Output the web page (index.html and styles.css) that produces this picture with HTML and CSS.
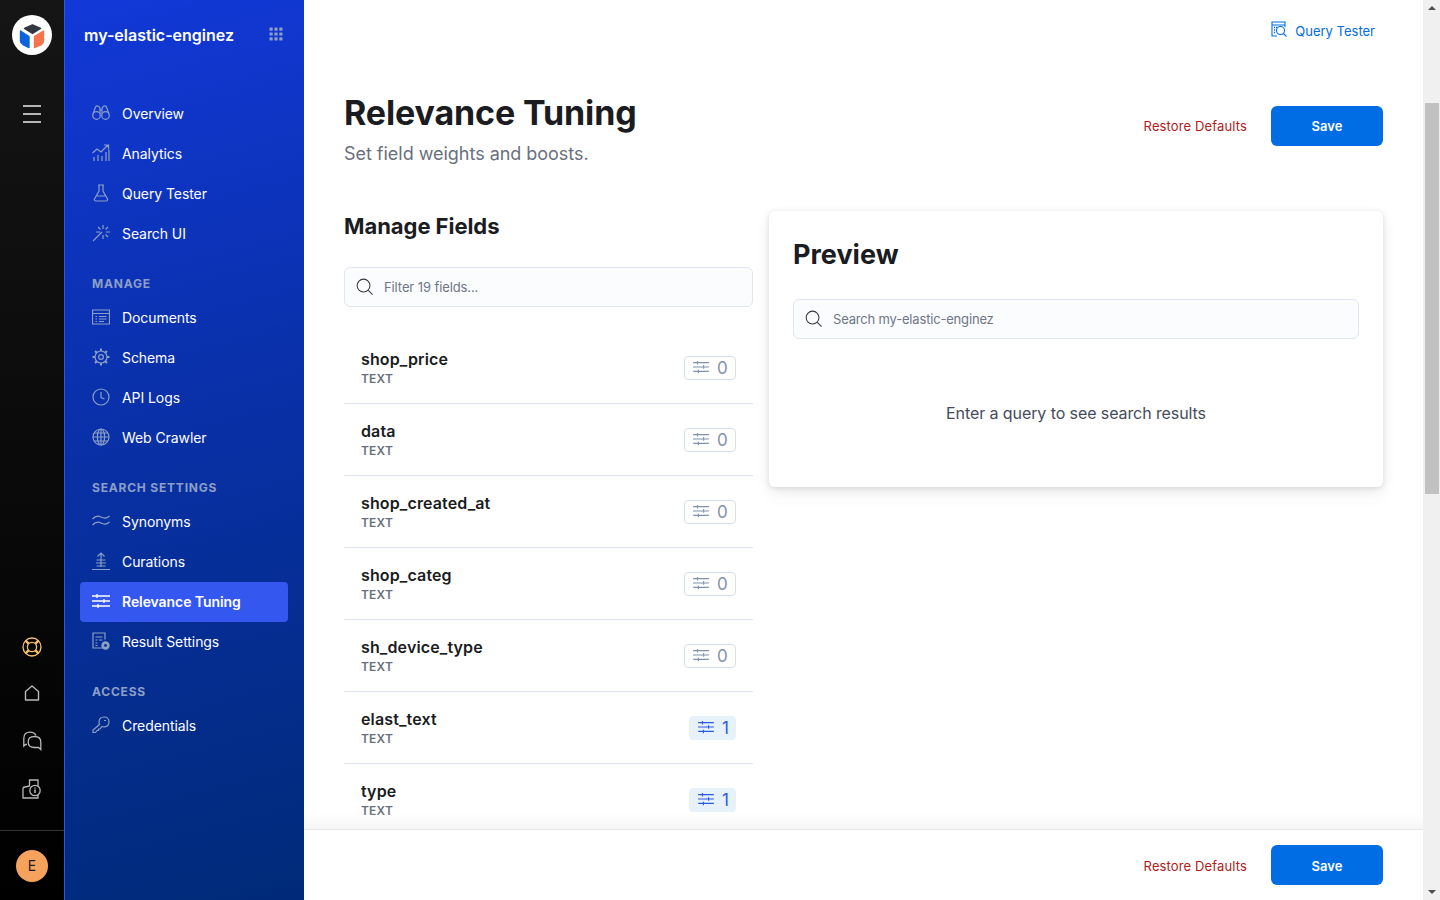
FILE: index.html
```html
<!DOCTYPE html>
<html lang="en">

<head>
    <meta charset="UTF-8">
    <meta name="viewport" content="width=device-width, initial-scale=1.0">
    <title>Relevance Tuning</title>
    <link rel="stylesheet" href="styles.css">
</head>

<body>
    <svg class="defs" width="0" height="0">
        <symbol id="tune" viewBox="0 0 18 16">
            <path d="M0 3h18M0 8h18M0 13h18M5 1v4M12 6v4M6 11v4" fill="none" stroke="currentColor" stroke-width="1.3" />
        </symbol>
        <symbol id="search" viewBox="0 0 18 18">
            <circle cx="8" cy="8" r="6.8" fill="none" stroke="currentColor" stroke-width="1.1" />
            <path d="M13 13l4.5 4.5" fill="none" stroke="currentColor" stroke-width="1.1" />
        </symbol>
    </svg>

    <div class="app">
        <div class="rail">
            <div class="logo">
                <svg width="28" height="28" viewBox="0 0 28 28" stroke-width="1.4" stroke-linejoin="round">
                    <path d="M14.5 4L22.5 7.5L14.5 12.5L6.5 7.5Z" fill="#343741" stroke="#343741" />
                    <path d="M2.5 10L11 15.5V26.5L5 23.5Q2.5 22 2.5 20Z" fill="#0b64dd" stroke="#0b64dd" />
                    <path d="M16.5 15.5L25.5 10V20Q25.5 22 23.5 23.5L16.5 26.5Z" fill="#f6744d" stroke="#f6744d" />
                </svg>
            </div>
            <button class="burger"><span></span><span></span><span></span></button>
            <div class="rail-icons">
                <svg width="20" height="20" viewBox="0 0 20 20" fill="none" stroke="#f5c26b" stroke-width="1.3">
                    <circle cx="10" cy="10" r="9" />
                    <circle cx="10" cy="10" r="4.6" />
                    <path d="M3.6 3.6l3.2 3.2M16.4 3.6l-3.2 3.2M3.6 16.4l3.2-3.2M16.4 16.4l-3.2-3.2" stroke-width="2.4" />
                </svg>
                <svg width="16" height="18" viewBox="0 0 16 18" fill="none" stroke="#b8b8b8" stroke-width="1.4">
                    <path d="M1.5 15V6.5L8 1L14.5 6.5V15Z" stroke-linejoin="round" />
                </svg>
                <svg width="20" height="20" viewBox="0 0 20 20" fill="none" stroke="#b8b8b8" stroke-width="1.3">
                    <path d="M5 13.5H3.5L1.8 15V7.5Q1.8 1.2 8 1.2Q12.5 1.2 14 4.5" />
                    <path d="M12.5 5.5Q18.8 5.5 18.8 11.2V18.5L16.5 16.5H12.5Q6.2 16.5 6.2 11Q6.2 5.5 12.5 5.5Z" />
                </svg>
                <svg width="20" height="20" viewBox="0 0 20 20" fill="none" stroke="#b8b8b8" stroke-width="1.3">
                    <path d="M1 8.5L7.5 7V1H16V8M1 8.5V19H16V15" />
                    <circle cx="13" cy="11.5" r="5.2" fill="#050505" />
                    <path d="M13 10.5v3.6M13 8.6v1" stroke="#ddd" />
                </svg>
            </div>
            <div class="rail-user">
                <div class="avatar">E</div>
            </div>
        </div>

        <nav class="side">
            <div class="brand">
                <span>my-elastic-enginez</span>
                <svg width="14" height="14" viewBox="0 0 14 14" fill="#8c9fc6">
                    <rect x="0.5" y="0.5" width="3.2" height="3.2" rx="0.6" />
                    <rect x="5.4" y="0.5" width="3.2" height="3.2" rx="0.6" />
                    <rect x="10.3" y="0.5" width="3.2" height="3.2" rx="0.6" />
                    <rect x="0.5" y="5.4" width="3.2" height="3.2" rx="0.6" />
                    <rect x="5.4" y="5.4" width="3.2" height="3.2" rx="0.6" />
                    <rect x="10.3" y="5.4" width="3.2" height="3.2" rx="0.6" />
                    <rect x="0.5" y="10.3" width="3.2" height="3.2" rx="0.6" />
                    <rect x="5.4" y="10.3" width="3.2" height="3.2" rx="0.6" />
                    <rect x="10.3" y="10.3" width="3.2" height="3.2" rx="0.6" />
                </svg>
            </div>

            <a class="item"><svg class="ico" viewBox="0 0 18 18"><circle cx="4.5" cy="11.5" r="3.8" /><circle cx="13.5" cy="11.5" r="3.8" /><path d="M1 10L3.5 3Q4.5 1.5 6.5 2.2L8 4V10M17 10L14.5 3Q13.5 1.5 11.5 2.2L10 4V10M8 6h2" /></svg>Overview</a>
            <a class="item"><svg class="ico" viewBox="0 0 18 18"><path d="M0.5 9L5 5L9 8L16 1M12 1h4.5v4.5M2 17v-4M6 17v-6M10 17v-5M14 17V8M17 17V6" /></svg>Analytics</a>
            <a class="item"><svg class="ico" viewBox="0 0 18 18"><path d="M6 1h6M7 1v6L2.5 15Q2 17 4 17H14Q16 17 15.5 15L11 7V1M5 12h8" /></svg>Query Tester</a>
            <a class="item"><svg class="ico" viewBox="0 0 18 18"><path d="M1 17L10 8M11 1v4M11 11v4M4 8h4M14 8h4M6 3l2.5 2.5M16 3l-2.5 2.5M16 13l-2.5-2.5" /></svg>Search UI</a>

            <div class="label">MANAGE</div>
            <a class="item"><svg class="ico" viewBox="0 0 18 18"><path d="M0.5 2h17v14h-17ZM0.5 5.5h17M3.5 8.5h1.5M7 8.5h7.5M3.5 11h1.5M7 11h7.5M3.5 13.5h1.5M7 13.5h5" /></svg>Documents</a>
            <a class="item"><svg class="ico" viewBox="0 0 18 18"><circle cx="9" cy="9" r="6" /><circle cx="9" cy="9" r="2.4" /><path d="M9 0.5v2.5M9 15v2.5M0.5 9h2.5M15 9h2.5M3 3l1.8 1.8M13.2 13.2L15 15M15 3l-1.8 1.8M4.8 13.2L3 15" stroke-width="2" /></svg>Schema</a>
            <a class="item"><svg class="ico" viewBox="0 0 18 18"><circle cx="9" cy="9" r="8" /><path d="M9 4v5.5l3.5 1.5" /></svg>API Logs</a>
            <a class="item"><svg class="ico" viewBox="0 0 18 18"><circle cx="9" cy="9" r="8" /><ellipse cx="9" cy="9" rx="3.6" ry="8" /><path d="M1 9h16M2 5h14M2 13h14M9 1v16" /></svg>Web Crawler</a>

            <div class="label">SEARCH SETTINGS</div>
            <a class="item"><svg class="ico" viewBox="0 0 18 18"><path d="M0.5 7Q4.5 2.5 9 5T17.5 4M0.5 13Q4.5 8.5 9 11T17.5 10" /></svg>Synonyms</a>
            <a class="item"><svg class="ico" viewBox="0 0 18 18"><path d="M0 17.5h18M9 1v14M5.5 4.5L9 1l3.5 3.5M4.5 8h9M4 11h10M4.5 14h9" /></svg>Curations</a>
            <a class="item active"><svg class="ico" viewBox="0 0 18 16"><use href="#tune" /></svg>Relevance Tuning</a>
            <a class="item"><svg class="ico" viewBox="0 0 18 18"><path d="M10.5 16H1V1h12v6.5M3.5 5h7M3.5 8h2M7 8h3.5M3.5 11h2M3.5 13.5h2" /><circle cx="13.5" cy="13.5" r="2.8" stroke-width="2.8" /></svg>Result Settings</a>

            <div class="label">ACCESS</div>
            <a class="item"><svg class="ico" viewBox="0 0 18 18"><path d="M7 6.5Q7 1 12 1Q17 1 17 6Q17 11 11.5 11L10 10.5L8 13H6.5V14.5H5L3.5 16.5H1V14L7.5 8.5Q7 7.5 7 6.5ZM12 4.5h2" /></svg>Credentials</a>
        </nav>

        <div class="main">
            <div class="scroll">
                <div class="top-link">
                    <a>
                        <svg width="16" height="16" viewBox="0 0 16 16" fill="none" stroke="currentColor" stroke-width="1.1">
                            <path d="M6 15H1V1h13v5M1 4h13" />
                            <path d="M3 6.5h1M5 6.5h1M3 9h1M3 11.5h1" stroke-width="1.4" />
                            <circle cx="9.5" cy="9.5" r="4" />
                            <path d="M12.5 12.5l3 3" />
                        </svg>
                        Query Tester
                    </a>
                </div>

                <div class="page-head">
                    <div>
                        <h1>Relevance Tuning</h1>
                        <p>Set field weights and boosts.</p>
                    </div>
                    <div class="actions">
                        <a class="restore">Restore Defaults</a>
                        <button class="save">Save</button>
                    </div>
                </div>

                <div class="columns">
                    <div class="fields">
                        <h2>Manage Fields</h2>
                        <div class="search-box">
                            <svg class="search-ico"><use href="#search" /></svg>
                            <span>Filter 19 fields...</span>
                        </div>
                        <div class="field-list">
                            <div class="field">
                                <div><div class="name">shop_price</div><div class="type">TEXT</div></div>
                                <div class="weight"><svg><use href="#tune" /></svg>0</div>
                            </div>
                            <div class="field">
                                <div><div class="name">data</div><div class="type">TEXT</div></div>
                                <div class="weight"><svg><use href="#tune" /></svg>0</div>
                            </div>
                            <div class="field">
                                <div><div class="name">shop_created_at</div><div class="type">TEXT</div></div>
                                <div class="weight"><svg><use href="#tune" /></svg>0</div>
                            </div>
                            <div class="field">
                                <div><div class="name">shop_categ</div><div class="type">TEXT</div></div>
                                <div class="weight"><svg><use href="#tune" /></svg>0</div>
                            </div>
                            <div class="field">
                                <div><div class="name">sh_device_type</div><div class="type">TEXT</div></div>
                                <div class="weight"><svg><use href="#tune" /></svg>0</div>
                            </div>
                            <div class="field">
                                <div><div class="name">elast_text</div><div class="type">TEXT</div></div>
                                <div class="weight on"><svg><use href="#tune" /></svg>1</div>
                            </div>
                            <div class="field">
                                <div><div class="name">type</div><div class="type">TEXT</div></div>
                                <div class="weight on"><svg><use href="#tune" /></svg>1</div>
                            </div>
                        </div>
                    </div>

                    <div class="preview">
                        <h2>Preview</h2>
                        <div class="search-box">
                            <svg class="search-ico"><use href="#search" /></svg>
                            <span>Search my-elastic-enginez</span>
                        </div>
                        <div class="empty">Enter a query to see search results</div>
                    </div>
                </div>
            </div>

            <div class="footer">
                <a class="restore">Restore Defaults</a>
                <button class="save">Save</button>
            </div>
        </div>

        <div class="scrollbar">
            <div class="arrow up"></div>
            <div class="track"><div class="thumb"></div></div>
            <div class="arrow down"></div>
        </div>
    </div>
</body>

</html>
```

FILE: styles.css
```css
* {
    box-sizing: border-box;
}

body {
    margin: 0;
    font-family: Inter, "Noto Sans", sans-serif;
    color: #1a1c21;
    background-color: #fff;
    overflow: hidden;
}

.defs {
    display: block;
    height: 0;
}

h1,
h2,
p {
    margin: 0;
}

.app {
    display: flex;
    height: 900px;
}

/* dark rail */
.rail {
    width: 64px;
    flex-shrink: 0;
    display: flex;
    flex-direction: column;
    align-items: center;
    background: linear-gradient(180deg, #151515, #000);
}

.logo {
    width: 40px;
    height: 40px;
    margin-top: 15px;
    border-radius: 50%;
    background-color: #fff;
    display: flex;
    align-items: center;
    justify-content: center;
}

.burger {
    width: 18px;
    margin-top: 50px;
    padding: 0;
    border: none;
    background: none;
    display: flex;
    flex-direction: column;
    gap: 6px;
}

.burger span {
    height: 2px;
    background-color: #b5b5b5;
}

.rail-icons {
    margin-top: auto;
    display: flex;
    flex-direction: column;
    align-items: center;
    gap: 28px;
    margin-bottom: 31px;
}

.rail-user {
    width: 100%;
    height: 70px;
    border-top: 1px solid #333;
    display: flex;
    align-items: center;
    justify-content: center;
}

.avatar {
    width: 32px;
    height: 32px;
    border-radius: 50%;
    background-color: #f5a35c;
    color: #1a1c21;
    font-size: 14px;
    display: flex;
    align-items: center;
    justify-content: center;
}

/* blue nav */
.side {
    width: 240px;
    flex-shrink: 0;
    padding: 0 16px;
    border-left: 1px solid #3055e8;
    background: linear-gradient(165deg, #1238d8 0%, #0a31ad 40%, #002a78 100%);
}

.brand {
    height: 94px;
    padding: 0 4px 0 3px;
    display: flex;
    justify-content: space-between;
    align-items: flex-start;
    color: #fff;
    font-size: 16px;
    font-weight: 600;
    line-height: 70px;
}

.brand svg {
    margin-top: 27px;
    margin-right: 1px;
}

.item {
    height: 40px;
    padding: 0 12px 2px;
    border-radius: 4px;
    display: flex;
    align-items: center;
    gap: 12px;
    color: #fff;
    font-size: 14px;
    letter-spacing: -0.08px;
    width: 208px;
    margin-left: -1px;
}

.item.active {
    background-color: #3457f0;
    font-weight: 600;
}

.ico {
    width: 18px;
    height: 18px;
    fill: none;
    stroke: #8c9fc6;
    stroke-width: 1.2;
}

.item.active .ico {
    stroke: none;
    color: #fff;
}

.label {
    height: 24px;
    margin-top: 20px;
    padding-left: 11px;
    color: #8c9fc6;
    font-size: 12px;
    font-weight: 700;
    letter-spacing: 0.8px;
    line-height: 20px;
}

/* main */
.main {
    flex: 1;
    display: flex;
    flex-direction: column;
    min-width: 0;
}

.scroll {
    flex: 1;
    overflow: hidden;
    padding: 0 40px;
    min-height: 0;
}

.top-link {
    height: 62px;
    padding-right: 8px;
    display: flex;
    justify-content: flex-end;
    align-items: center;
}

.top-link a {
    display: flex;
    align-items: center;
    gap: 8px;
    color: #006de4;
    font-size: 13px;
}

.top-link svg {
    margin-top: -4px;
}

.page-head {
    display: flex;
    justify-content: space-between;
    align-items: flex-start;
    margin-top: 28px;
    height: 121px;
}

h1 {
    font-size: 34px;
    font-weight: 700;
    letter-spacing: -0.13px;
    line-height: 46px;
}

.page-head p {
    margin-top: 5px;
    font-size: 18px;
    letter-spacing: -0.03px;
    line-height: 26px;
    color: #69707d;
}

.actions {
    display: flex;
    align-items: center;
    gap: 24px;
    margin-top: 16px;
}

.restore {
    color: #b01a1a;
    font-size: 13px;
    letter-spacing: 0.13px;
}

.save {
    width: 112px;
    height: 40px;
    border: none;
    border-radius: 6px;
    background-color: #006de4;
    color: #fff;
    font-family: inherit;
    font-size: 13px;
    font-weight: 600;
}

.columns {
    display: flex;
    gap: 16px;
}

.fields {
    width: 409px;
    flex-shrink: 0;
}

.fields h2 {
    font-size: 22px;
    font-weight: 700;
    letter-spacing: -0.05px;
    line-height: 30px;
    margin-bottom: 26px;
}

.search-box {
    height: 40px;
    padding: 0 11px 1px;
    display: flex;
    align-items: center;
    gap: 11px;
    border: 1px solid #e3e6ef;
    border-radius: 6px;
    background-color: #fbfcfd;
    font-size: 13px;
    letter-spacing: -0.1px;
    color: #6f7686;
}

.preview .search-box {
    letter-spacing: -0.18px;
}

.search-ico {
    width: 17px;
    height: 17px;
    color: #343741;
}

.field-list {
    margin-top: 25px;
}

.field {
    height: 72px;
    padding: 0 17px;
    border-bottom: 1px solid #dde2ec;
    display: flex;
    justify-content: space-between;
    align-items: center;
}

.name {
    font-size: 16px;
    font-weight: 600;
    letter-spacing: 0.13px;
    line-height: 20px;
}

.type {
    margin-top: 2px;
    font-size: 12px;
    font-weight: 600;
    letter-spacing: 0.2px;
    line-height: 16px;
    color: #69707d;
}

.weight {
    width: 52px;
    height: 24px;
    padding-left: 8px;
    display: flex;
    align-items: center;
    gap: 8px;
    border: 1px solid #d8e0ea;
    border-radius: 4px;
    color: #8093ad;
    font-size: 17px;
}

.weight svg {
    width: 16px;
    height: 14px;
    margin-top: -2px;
}

.weight.on {
    width: 47px;
    border-color: #e6f1fa;
    background-color: #e6f1fa;
    color: #2a5be0;
}

.preview {
    width: 614px;
    height: 276px;
    padding: 24px;
    border-radius: 6px;
    background-color: #fff;
    box-shadow: 0 1px 5px rgba(0, 0, 0, 0.09), 0 3px 12px rgba(0, 0, 0, 0.07), 0 8px 20px rgba(0, 0, 0, 0.04);
}

.preview h2 {
    padding-top: 1px;
    font-size: 27px;
    font-weight: 700;
    line-height: 38px;
    margin-bottom: 25px;
}

.empty {
    margin-top: 63px;
    text-align: center;
    font-size: 16px;
    letter-spacing: -0.09px;
    line-height: 22px;
    color: #454c5c;
}

/* bottom bar */
.footer {
    position: relative;
    height: 71px;
    flex-shrink: 0;
    padding: 0 40px;
    display: flex;
    justify-content: flex-end;
    align-items: center;
    gap: 24px;
    background-color: #fff;
    border-top: 1px solid #e6e6e6;
}

.footer .restore {
    padding-top: 2px;
}

.footer .save {
    padding-top: 3px;
}

.footer::before {
    content: "";
    position: absolute;
    left: 0;
    right: 0;
    top: -17px;
    height: 16px;
    background: linear-gradient(180deg, rgba(245, 245, 245, 0), rgba(245, 245, 245, 0.9));
}

/* fake window scrollbar */
.scrollbar {
    width: 17px;
    flex-shrink: 0;
    display: flex;
    flex-direction: column;
    background-color: #f0f0f0;
}

.arrow {
    height: 17px;
    position: relative;
}

.arrow::after {
    content: "";
    position: absolute;
    left: 5px;
    border-left: 4px solid transparent;
    border-right: 4px solid transparent;
}

.arrow.up::after {
    top: 6px;
    border-bottom: 4px solid #505050;
}

.arrow.down::after {
    top: 7px;
    border-top: 4px solid #505050;
}

.track {
    flex: 1;
    padding-top: 86px;
}

.thumb {
    height: 391px;
    margin: 0 1px 0 2px;
    background-color: #c1c1c1;
}
```
